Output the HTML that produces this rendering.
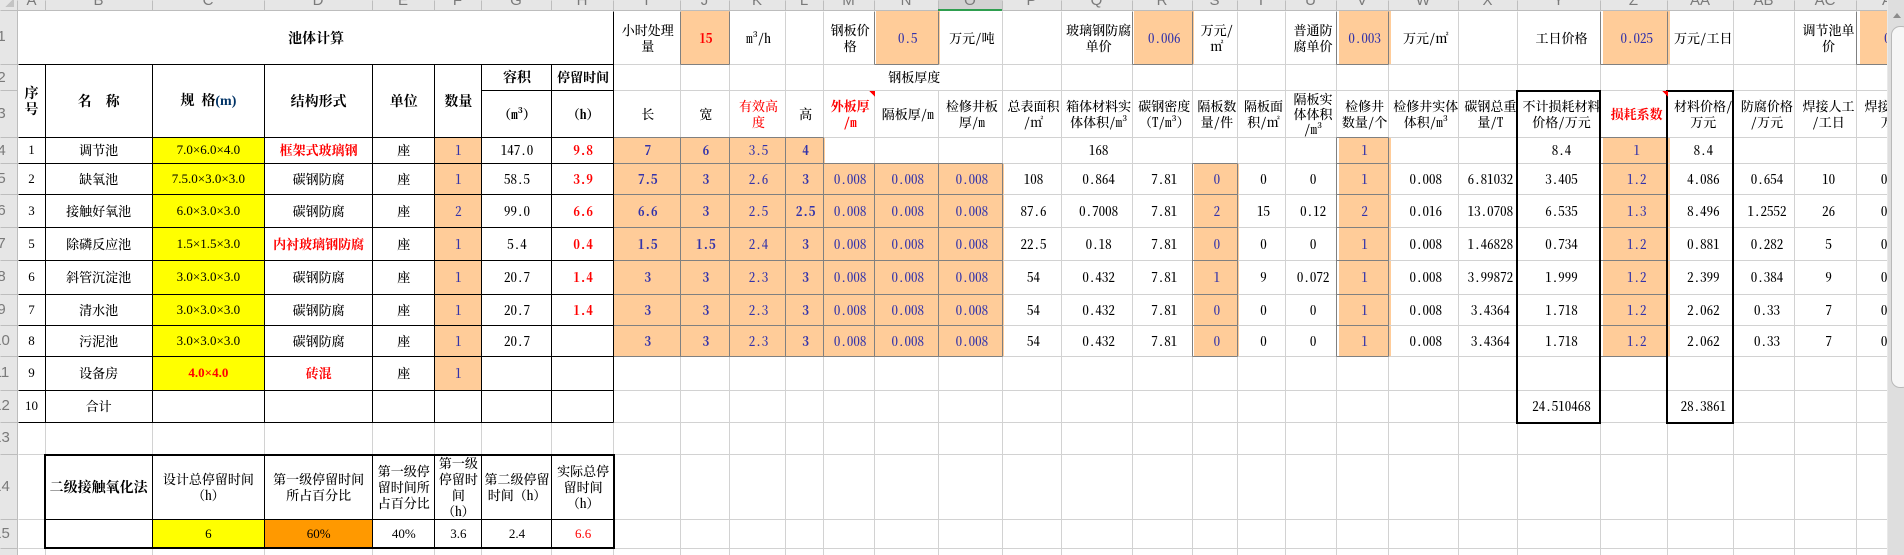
<!DOCTYPE html>
<html lang="zh"><head><meta charset="utf-8"><title>池体计算</title>
<style>
html,body{margin:0;padding:0;width:1904px;height:555px;overflow:hidden;background:#fff}
#clip{position:absolute;left:0;top:0;width:1887px;height:555px;overflow:hidden}
table{position:absolute;left:18px;top:11px;border-collapse:separate;border-spacing:0;table-layout:fixed;width:1910px;font:500 13px/16px "Noto Serif CJK SC","Liberation Serif",serif;font-feature-settings:"hwid";color:#000}
td{padding:0;text-align:center;vertical-align:middle;overflow:hidden;white-space:nowrap}
em{font-style:normal;font-feature-settings:normal}
.o{background:#fc9}
.b{color:#33a}
.B{color:#33a;font-weight:700}
.r{color:#f00;font-weight:700}
.h{font-weight:700;font-size:14px}
.t{font-family:"Liberation Serif",serif;font-size:13px}
.y{background:#ff0}
.m{font-family:"Liberation Serif",serif;color:#036}
svg{position:absolute;left:0;top:0}
#hd{position:absolute;left:0;top:0;width:1887px;height:10px;background:#e6e6e6;overflow:hidden}
#hd i{position:absolute;top:-8px;font:normal 15px/18px "Liberation Sans",sans-serif;color:#7a7a7a;text-align:center}
#ln{position:absolute;left:0;top:0;width:17px;height:555px;background:#e6e6e6;overflow:hidden}
#ln i{position:absolute;left:-14px;width:31px;font:normal 15px/18px "Liberation Sans",sans-serif;color:#7a7a7a;text-align:center}
#sb{position:absolute;left:1887px;top:0;width:17px;height:555px;background:#dedede;border-left:1px solid #e9e9e9;box-sizing:border-box;overflow:hidden}
#th{position:absolute;left:3px;top:26px;width:20px;height:362px;background:#f6f6f6;border:1px solid #b9b9b9;border-radius:9px;box-sizing:border-box}
#ar{position:absolute;left:5px;top:13px;width:0;height:0;border-left:4px solid transparent;border-right:4px solid transparent;border-bottom:5px solid #8c8c8c}
</style></head><body>
<div id="clip">
<table>
<colgroup>
<col style="width:27px"><col style="width:107px"><col style="width:112px"><col style="width:108px"><col style="width:62px"><col style="width:47px"><col style="width:70px"><col style="width:62px">
<col style="width:67px"><col style="width:49px"><col style="width:56px"><col style="width:38px"><col style="width:51px"><col style="width:64px"><col style="width:64px"><col style="width:59px"><col style="width:71px"><col style="width:60px"><col style="width:45px"><col style="width:48px"><col style="width:51px"><col style="width:52px"><col style="width:70px"><col style="width:59px"><col style="width:83px"><col style="width:67px"><col style="width:66px"><col style="width:61px"><col style="width:62px"><col style="width:68px">
</colgroup>
<tr style="height:53px"><td colspan="8" class="h">池体计算</td><td>小时处理<br>量</td><td class="o r">15</td><td>m³/h</td><td></td><td>钢板价<br>格</td><td class="o b">0.5</td><td>万元/吨</td><td></td><td>玻璃钢防腐<br>单价</td><td class="o b">0.006</td><td>万元/<br>㎡</td><td></td><td>普通防<br>腐单价</td><td class="o b">0.003</td><td>万元/㎡</td><td></td><td>工日价格</td><td class="o b">0.025</td><td>万元/工日</td><td></td><td>调节池单<br>价</td><td class="o b">0.1</td></tr>
<tr style="height:26px"><td rowspan="2" class="h">序<br>号</td><td rowspan="2" class="h">名&nbsp;&nbsp;称</td><td rowspan="2" class="h">规&nbsp;格<span class="m">(m)</span></td><td rowspan="2" class="h">结构形式</td><td rowspan="2" class="h">单位</td><td rowspan="2" class="h">数量</td><td class="h">容积</td><td class="h" style="font-size:13px">停留时间</td><td></td><td></td><td></td><td></td><td colspan="3">钢板厚度</td><td colspan="15"></td></tr>
<tr style="height:47px"><td class="h" style="font-size:13px"><em>（</em>m³<em>）</em></td><td class="h" style="font-size:13px"><em>（</em>h<em>）</em></td><td>长</td><td>宽</td><td style="color:#f00">有效高<br>度</td><td>高</td><td class="r">外板厚<br>/m</td><td>隔板厚/m</td><td>检修井板<br>厚/m</td><td>总表面积<br>/㎡</td><td>箱体材料实<br>体体积/m³</td><td>碳钢密度<br><em>（</em>T/m³<em>）</em></td><td>隔板数<br>量/件</td><td>隔板面<br>积/㎡</td><td style="line-height:15px">隔板实<br>体体积<br>/m³</td><td>检修井<br>数量/个</td><td>检修井实体<br>体积/m³</td><td>碳钢总重<br>量/T</td><td>不计损耗材料<br>价格/万元</td><td class="r">损耗系数</td><td>材料价格/<br>万元</td><td>防腐价格<br>/万元</td><td>焊接人工<br>/工日</td><td>焊接人工/<br>万元</td></tr>
<tr style="height:26px"><td class="t">1</td><td>调节池</td><td class="t y">7.0×6.0×4.0</td><td class="r">框架式玻璃钢</td><td>座</td><td class="o b">1</td><td>147.0</td><td class="r">9.8</td><td class="o B">7</td><td class="o B">6</td><td class="o b">3.5</td><td class="o B">4</td><td></td><td></td><td></td><td></td><td>168</td><td></td><td></td><td></td><td></td><td class="o b">1</td><td></td><td></td><td>8.4</td><td class="o b">1</td><td>8.4</td><td></td><td></td><td></td></tr>
<tr style="height:31px"><td class="t">2</td><td>缺氧池</td><td class="t y">7.5.0×3.0×3.0</td><td>碳钢防腐</td><td>座</td><td class="o b">1</td><td>58.5</td><td class="r">3.9</td><td class="o B">7.5</td><td class="o B">3</td><td class="o b">2.6</td><td class="o B">3</td><td class="o b">0.008</td><td class="o b">0.008</td><td class="o b">0.008</td><td>108</td><td>0.864</td><td>7.81</td><td class="o b">0</td><td>0</td><td>0</td><td class="o b">1</td><td>0.008</td><td>6.81032</td><td>3.405</td><td class="o b">1.2</td><td>4.086</td><td>0.654</td><td>10</td><td>0.25</td></tr>
<tr style="height:33px"><td class="t">3</td><td>接触好氧池</td><td class="t y">6.0×3.0×3.0</td><td>碳钢防腐</td><td>座</td><td class="o b">2</td><td>99.0</td><td class="r">6.6</td><td class="o B">6.6</td><td class="o B">3</td><td class="o b">2.5</td><td class="o B">2.5</td><td class="o b">0.008</td><td class="o b">0.008</td><td class="o b">0.008</td><td>87.6</td><td>0.7008</td><td>7.81</td><td class="o b">2</td><td>15</td><td>0.12</td><td class="o b">2</td><td>0.016</td><td>13.0708</td><td>6.535</td><td class="o b">1.3</td><td>8.496</td><td>1.2552</td><td>26</td><td>0.65</td></tr>
<tr style="height:33px"><td class="t">5</td><td>除磷反应池</td><td class="t y">1.5×1.5×3.0</td><td class="r">内衬玻璃钢防腐</td><td>座</td><td class="o b">1</td><td>5.4</td><td class="r">0.4</td><td class="o B">1.5</td><td class="o B">1.5</td><td class="o b">2.4</td><td class="o B">3</td><td class="o b">0.008</td><td class="o b">0.008</td><td class="o b">0.008</td><td>22.5</td><td>0.18</td><td>7.81</td><td class="o b">0</td><td>0</td><td>0</td><td class="o b">1</td><td>0.008</td><td>1.46828</td><td>0.734</td><td class="o b">1.2</td><td>0.881</td><td>0.282</td><td>5</td><td>0.13</td></tr>
<tr style="height:34px"><td class="t">6</td><td>斜管沉淀池</td><td class="t y">3.0×3.0×3.0</td><td>碳钢防腐</td><td>座</td><td class="o b">1</td><td>20.7</td><td class="r">1.4</td><td class="o B">3</td><td class="o B">3</td><td class="o b">2.3</td><td class="o B">3</td><td class="o b">0.008</td><td class="o b">0.008</td><td class="o b">0.008</td><td>54</td><td>0.432</td><td>7.81</td><td class="o b">1</td><td>9</td><td>0.072</td><td class="o b">1</td><td>0.008</td><td>3.99872</td><td>1.999</td><td class="o b">1.2</td><td>2.399</td><td>0.384</td><td>9</td><td>0.23</td></tr>
<tr style="height:31px"><td class="t">7</td><td>清水池</td><td class="t y">3.0×3.0×3.0</td><td>碳钢防腐</td><td>座</td><td class="o b">1</td><td>20.7</td><td class="r">1.4</td><td class="o B">3</td><td class="o B">3</td><td class="o b">2.3</td><td class="o B">3</td><td class="o b">0.008</td><td class="o b">0.008</td><td class="o b">0.008</td><td>54</td><td>0.432</td><td>7.81</td><td class="o b">0</td><td>0</td><td>0</td><td class="o b">1</td><td>0.008</td><td>3.4364</td><td>1.718</td><td class="o b">1.2</td><td>2.062</td><td>0.33</td><td>7</td><td>0.18</td></tr>
<tr style="height:31px"><td class="t">8</td><td>污泥池</td><td class="t y">3.0×3.0×3.0</td><td>碳钢防腐</td><td>座</td><td class="o b">1</td><td>20.7</td><td></td><td class="o B">3</td><td class="o B">3</td><td class="o b">2.3</td><td class="o B">3</td><td class="o b">0.008</td><td class="o b">0.008</td><td class="o b">0.008</td><td>54</td><td>0.432</td><td>7.81</td><td class="o b">0</td><td>0</td><td>0</td><td class="o b">1</td><td>0.008</td><td>3.4364</td><td>1.718</td><td class="o b">1.2</td><td>2.062</td><td>0.33</td><td>7</td><td>0.18</td></tr>
<tr style="height:34px"><td class="t">9</td><td>设备房</td><td class="t y" style="color:#f00;font-weight:700">4.0×4.0</td><td class="r">砖混</td><td>座</td><td class="o b">1</td><td colspan="24"></td></tr>
<tr style="height:32px"><td class="t">10</td><td>合计</td><td colspan="22"></td><td>24.510468</td><td></td><td>28.3861</td><td colspan="3"></td></tr>
<tr style="height:32px"><td colspan="30"></td></tr>
<tr style="height:65px"><td></td><td class="h">二级接触氧化法</td><td>设计总停留时间<br><em>（</em>h<em>）</em></td><td>第一级停留时间<br>所占百分比</td><td>第一级停<br>留时间所<br>占百分比</td><td>第一级<br>停留时<br>间<br><em>（</em>h<em>）</em></td><td>第二级停留<br>时间<em>（</em>h<em>）</em></td><td>实际总停<br>留时间<br><em>（</em>h<em>）</em></td><td colspan="22"></td></tr>
<tr style="height:29px"><td></td><td></td><td class="t y">6</td><td class="t" style="background:#f90">60%</td><td class="t">40%</td><td class="t">3.6</td><td class="t">2.4</td><td class="t" style="color:#f00">6.6</td><td colspan="22"></td></tr>
</table>
<svg width="1887" height="555" fill="none" shape-rendering="crispEdges">
<g transform="translate(.5 .5)">
<path stroke="#d2d2d2" d="M680 11V555M729 11V555M785 11V555M823 11V555M874 11V64M874 90V555M938 11V64M938 90V555M1002 11V555M1061 11V555M1132 11V555M1192 11V555M1237 11V555M1285 11V555M1336 11V555M1388 11V555M1458 11V555M1517 11V555M1600 11V555M1667 11V555M1733 11V555M1794 11V555M1856 11V555
M613 64H1887M613 90H1887M613 137H1887M613 163H1887M613 194H1887M613 227H1887M613 260H1887M613 294H1887M613 325H1887M613 356H1887M613 390H1887M613 422H1887M613 454H1887M613 519H1887M613 548H1887
M45 422V555M152 422V555M264 422V555M372 422V555M434 422V555M481 422V555M551 422V555M613 422V555M18 454H613M18 519H45M18 548H613"/>
<path stroke="#808080" d="M680 11V64M729 11V64M874 11V64M938 11V64M1132 11V64M1192 11V64M1336 11V64M1388 11V64M1600 11V64M1667 11V64M1856 11V64M680 64H729M874 64H938M1132 64H1192M1336 64H1388M1600 64H1667M1856 64H1887
M613 137H823M613 163H1002M613 194H1002M613 227H1002M613 260H1002M613 294H1002M613 325H1002M613 356H1002M680 137V356M729 137V356M785 137V356M823 137V356M874 163V356M938 163V356M1002 163V356
M1192 163H1237M1192 194H1237M1192 227H1237M1192 260H1237M1192 294H1237M1192 325H1237M1192 356H1237M1192 163V356M1237 163V356
M1336 137H1388M1336 163H1388M1336 194H1388M1336 227H1388M1336 260H1388M1336 294H1388M1336 325H1388M1336 356H1388M1336 137V356M1388 137V356
M1600 137H1667M1600 163H1667M1600 194H1667M1600 227H1667M1600 260H1667M1600 294H1667M1600 325H1667M1600 356H1667
M434 163H481M434 194H481M434 227H481M434 260H481M434 294H481M434 325H481"/>
<path stroke="#000" d="M18 64H613M481 90H613M18 137H613M18 163H613M18 194H613M18 227H613M18 260H613M18 294H613M18 325H613M18 356H613M18 390H613M18 422H613
M613 11V422M45 64V422M152 64V422M264 64V422M372 64V422M434 64V422M481 64V422M551 64V422
M152 454V548M264 454V548M372 454V548M434 454V548M481 454V548M551 454V548M45 519H613"/>
</g>
<path stroke="#000" stroke-width="2" d="M45 455H614V548H45ZM1517 91H1600M1667 91H1733M1517 90V423H1600V90M1667 90V423H1733V90"/>
<path fill="#f00" d="M869 91H875V97ZM1662 91H1668V97Z"/>
</svg>
</div>
<div id="hd">
<i style="left:18px;width:27px">A</i><i style="left:45px;width:107px">B</i><i style="left:152px;width:112px">C</i><i style="left:264px;width:108px">D</i><i style="left:372px;width:62px">E</i><i style="left:434px;width:47px">F</i><i style="left:481px;width:70px">G</i><i style="left:551px;width:62px">H</i><i style="left:613px;width:67px">I</i><i style="left:680px;width:49px">J</i><i style="left:729px;width:56px">K</i><i style="left:785px;width:38px">L</i><i style="left:823px;width:51px">M</i><i style="left:874px;width:64px">N</i><i style="left:938px;width:64px;height:18px;background:#d2d2d2">O</i><i style="left:1002px;width:59px">P</i><i style="left:1061px;width:71px">Q</i><i style="left:1132px;width:60px">R</i><i style="left:1192px;width:45px">S</i><i style="left:1237px;width:48px">T</i><i style="left:1285px;width:51px">U</i><i style="left:1336px;width:52px">V</i><i style="left:1388px;width:70px">W</i><i style="left:1458px;width:59px">X</i><i style="left:1517px;width:83px">Y</i><i style="left:1600px;width:67px">Z</i><i style="left:1667px;width:66px">AA</i><i style="left:1733px;width:61px">AB</i><i style="left:1794px;width:62px">AC</i><i style="left:1882px;width:20px">AD</i>
</div>
<div id="ln">
<i style="top:28px">1</i><i style="top:69px">2</i><i style="top:105px">3</i><i style="top:142px">4</i><i style="top:170px">5</i><i style="top:202px">6</i><i style="top:235px">7</i><i style="top:268px">8</i><i style="top:301px">9</i><i style="top:332px">10</i><i style="top:364px">11</i><i style="top:397px">12</i><i style="top:429px">13</i><i style="top:478px">14</i><i style="top:525px">15</i>
</div>
<svg width="1904" height="555" fill="none" shape-rendering="crispEdges" style="pointer-events:none">
<g transform="translate(.5 .5)">
<path stroke="#bdbdbd" d="M45 0V10M152 0V10M264 0V10M372 0V10M434 0V10M481 0V10M551 0V10M613 0V10M680 0V10M729 0V10M785 0V10M823 0V10M874 0V10M938 0V10M1002 0V10M1061 0V10M1132 0V10M1192 0V10M1237 0V10M1285 0V10M1336 0V10M1388 0V10M1458 0V10M1517 0V10M1600 0V10M1667 0V10M1733 0V10M1794 0V10M1856 0V10
M0 10H1887M17 0V555
M0 64H17M0 90H17M0 137H17M0 163H17M0 194H17M0 227H17M0 260H17M0 294H17M0 325H17M0 356H17M0 390H17M0 422H17M0 454H17M0 519H17M0 548H17"/>
</g>
<path fill="#c4c4c4" d="M14 0V7H5L12 0Z"/>
<rect x="938" y="9" width="64" height="2" fill="#2e9e4f"/>
</svg>
<div id="sb"><div id="ar"></div><div id="th"></div></div>
</body></html>
